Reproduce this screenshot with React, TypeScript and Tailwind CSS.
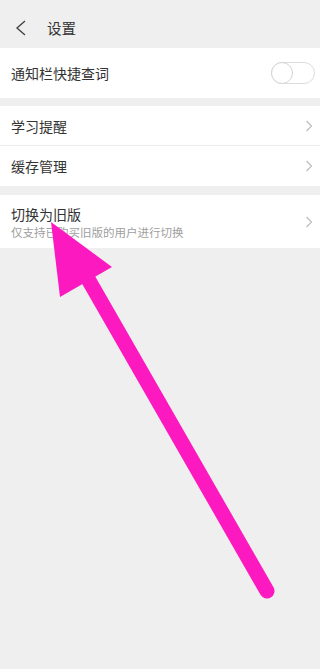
const font = { fontFamily: '"Noto Sans CJK SC", "Noto Sans", sans-serif' };

function Toggle() {
  return (
    <div className="relative w-[44px] h-[22px] rounded-full border border-[#dcdcdc] bg-white">
      <div className="absolute left-[-1px] top-[-1px] w-[22px] h-[22px] rounded-full border border-[#d4d4d4] bg-white" />
    </div>
  );
}

function Chevron() {
  return (
    <svg width="8" height="12" viewBox="0 0 8 12" className="mr-[1px]">
      <polyline points="1.5,1 6.5,6 1.5,11" fill="none" stroke="#bcbcbc" strokeWidth="1.2" />
    </svg>
  );
}

function Row({ label, sub, border }: { label: string; sub?: string; border?: boolean }) {
  return (
    <div className={`flex items-center justify-between pl-[11px] pr-[6px] ${sub ? 'h-[53px]' : 'h-[40px]'} ${border ? 'border-b border-[#ececec]' : ''}`}>
      <div className="flex flex-col">
        <span className="text-[14px] text-[#333] leading-[20px]">{label}</span>
        {sub && <span className="text-[11.5px] text-[#a0a0a0] leading-[16px]">{sub}</span>}
      </div>
      <Chevron />
    </div>
  );
}

export default function App() {
  return (
    <div className="relative w-[320px] h-[669px] bg-[#efefef] overflow-hidden" style={font}>
      {/* Header */}
      <div className="flex items-center h-[48px] pt-[8px] pl-[15px]">
        <svg width="12" height="16" viewBox="0 0 12 16">
          <polyline points="10,1 2,8 10,15" fill="none" stroke="#444" strokeWidth="1.4" />
        </svg>
        <span className="ml-[20px] text-[14.5px] text-[#333]">设置</span>
      </div>

      {/* Notification toggle */}
      <div className="flex items-center justify-between h-[50px] bg-white pl-[11px] pr-[5px]">
        <span className="text-[14px] text-[#333]">通知栏快捷查词</span>
        <Toggle />
      </div>

      <div className="mt-[8px] bg-white">
        <Row label="学习提醒" border />
        <Row label="缓存管理" />
      </div>

      <div className="mt-[9px] bg-white">
        <Row label="切换为旧版" sub="仅支持已购买旧版的用户进行切换" />
      </div>

      {/* Annotation arrow */}
      <svg className="absolute inset-0 pointer-events-none" width="320" height="669" viewBox="0 0 320 669">
        <line x1="84" y1="272" x2="267" y2="591" stroke="#fc19bf" strokeWidth="15" strokeLinecap="round" />
        <polygon points="51,222 112,267 60,297" fill="#fc19bf" />
      </svg>
    </div>
  );
}
